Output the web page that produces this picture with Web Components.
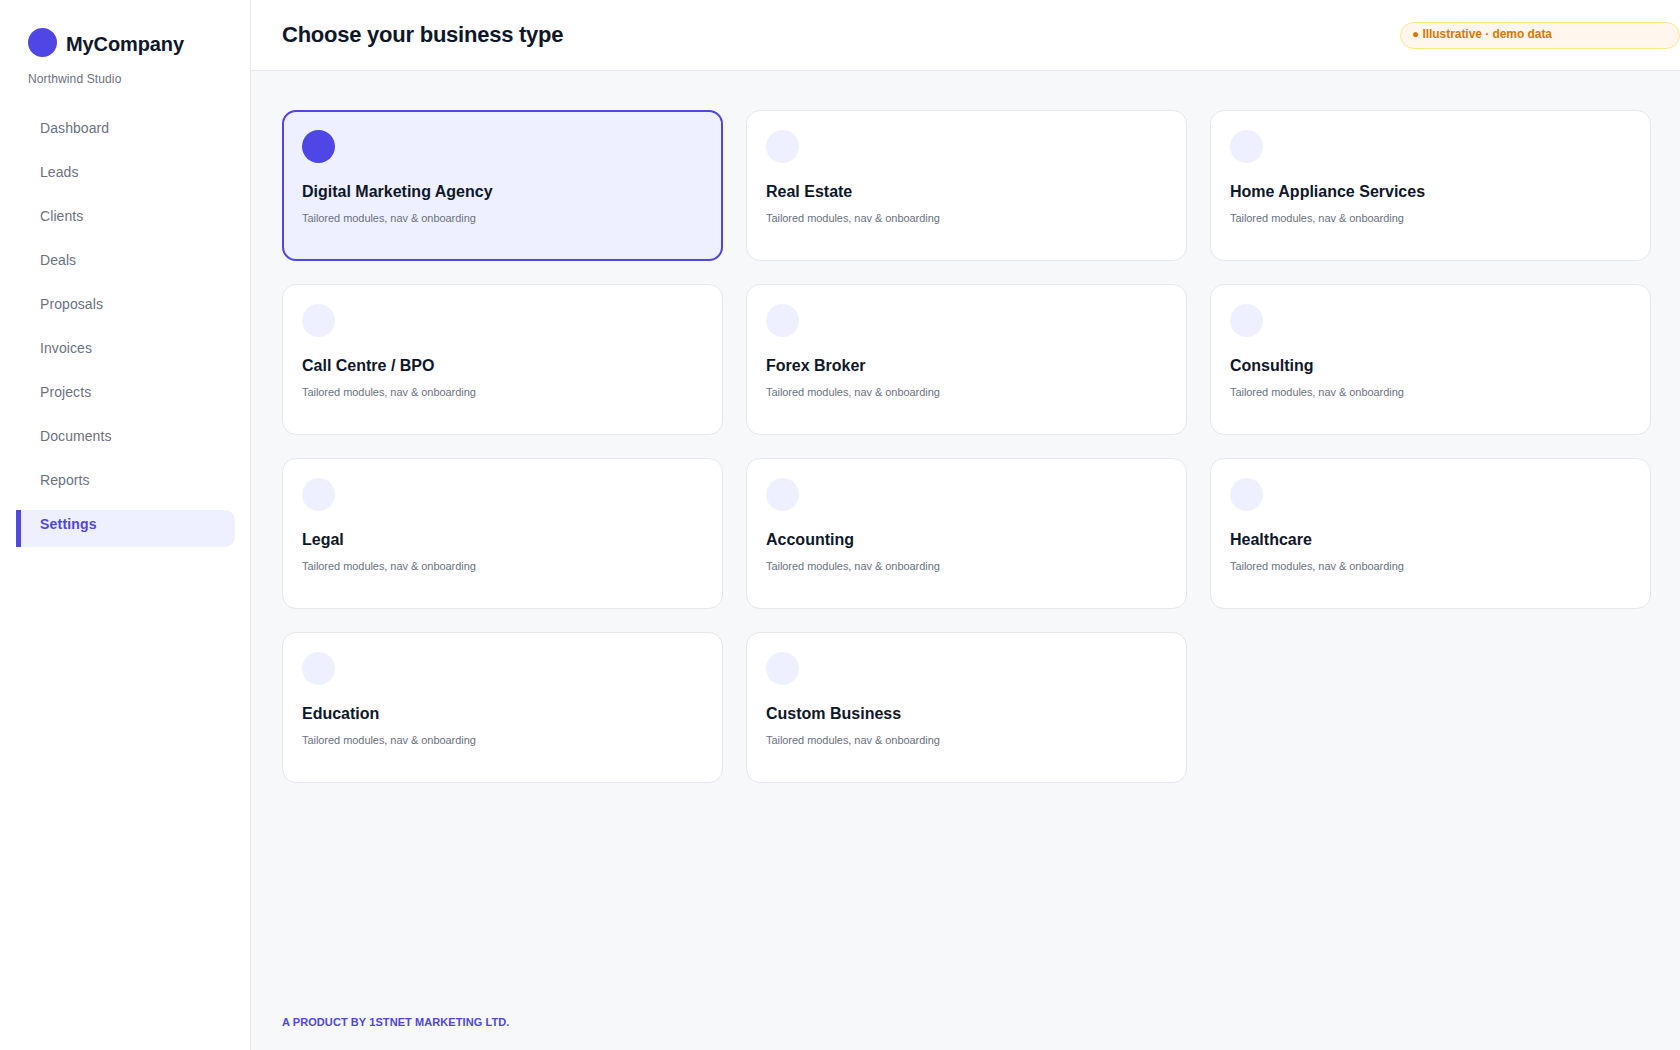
<!DOCTYPE html>
<html lang="en">
<head>
<meta charset="utf-8">
<title>Choose your business type</title>
<style>
	html, body { margin: 0; height: 100%; }
	body { font-family: "Liberation Sans", Arial, sans-serif; color: #0f172a; overflow: hidden; }
</style>
</head>
<body>
<app-shell>
	<side-bar slot="side" company="MyCompany" workspace="Northwind Studio">
		<nav-item>Dashboard</nav-item>
		<nav-item>Leads</nav-item>
		<nav-item>Clients</nav-item>
		<nav-item>Deals</nav-item>
		<nav-item>Proposals</nav-item>
		<nav-item>Invoices</nav-item>
		<nav-item>Projects</nav-item>
		<nav-item>Documents</nav-item>
		<nav-item>Reports</nav-item>
		<nav-item active>Settings</nav-item>
	</side-bar>
	<top-bar slot="top" heading="Choose your business type">● Illustrative · demo data</top-bar>
	<type-card selected>Digital Marketing Agency</type-card>
	<type-card>Real Estate</type-card>
	<type-card>Home Appliance Services</type-card>
	<type-card>Call Centre / BPO</type-card>
	<type-card>Forex Broker</type-card>
	<type-card>Consulting</type-card>
	<type-card>Legal</type-card>
	<type-card>Accounting</type-card>
	<type-card>Healthcare</type-card>
	<type-card>Education</type-card>
	<type-card>Custom Business</type-card>
	<span slot="foot">A PRODUCT BY 1STNET MARKETING LTD.</span>
</app-shell>

<script>
class AppShell extends HTMLElement {
	constructor() {
		super();
		this.attachShadow({ mode: 'open' });
		this.shadowRoot.innerHTML = `
			<style>
				:host { display: flex; height: 100vh; background: #f7f8fa; }
				main { flex: 1; min-width: 0; display: flex; flex-direction: column; }
				.grid {
					flex: 1;
					display: grid;
					grid-template-columns: repeat(3, 441px);
					grid-auto-rows: 151px;
					gap: 23px;
					padding: 39px 0 0 31px;
				}
				footer {
					padding: 0 0 21px 31px;
					font-size: 11px;
					line-height: 14px;
					font-weight: 700;
					letter-spacing: 0.08px;
					color: #4f46e5;
				}
			</style>
			<slot name="side"></slot>
			<main>
				<slot name="top"></slot>
				<div class="grid"><slot></slot></div>
				<footer><slot name="foot"></slot></footer>
			</main>
		`;
	}
}

class SideBar extends HTMLElement {
	constructor() {
		super();
		this.attachShadow({ mode: 'open' });
	}

	connectedCallback() {
		this.shadowRoot.innerHTML = `
			<style>
				:host {
					display: block;
					flex: none;
					width: 250px;
					background: #fff;
					border-right: 1px solid #e5e7eb;
				}
				.brand { display: flex; align-items: flex-start; gap: 9px; height: 29px; padding: 28px 0 0 28px; }
				.logo { width: 29px; height: 29px; border-radius: 50%; background: #4f46e5; }
				.name { padding-top: 1px; font-size: 20px; line-height: 30px; font-weight: 700; letter-spacing: -0.1px; color: #0f172a; }
				.org { padding: 14px 0 0 28px; font-size: 12px; line-height: 16px; letter-spacing: 0.13px; color: #6b7280; }
				nav { display: flex; flex-direction: column; gap: 7px; padding: 27px 15px 0 16px; }
			</style>
			<div class="brand"><div class="logo"></div><div class="name">${this.getAttribute('company')}</div></div>
			<div class="org">${this.getAttribute('workspace')}</div>
			<nav><slot></slot></nav>
		`;
	}
}

class NavItem extends HTMLElement {
	constructor() {
		super();
		this.attachShadow({ mode: 'open' });
		this.shadowRoot.innerHTML = `
			<style>
				:host {
					display: block;
					height: 37px;
					box-sizing: border-box;
					padding: 4px 0 0 24px;
					border-radius: 0 10px 10px 0;
					font-size: 14px;
					line-height: 20px;
					letter-spacing: 0.08px;
					color: #6b7280;
				}
				:host([active]) {
					padding-left: 19px;
					border-left: 5px solid #4f46e5;
					background: #eef0ff;
					color: #4f46e5;
					font-weight: 700;
					letter-spacing: 0.2px;
				}
			</style>
			<slot></slot>
		`;
	}
}

class TopBar extends HTMLElement {
	constructor() {
		super();
		this.attachShadow({ mode: 'open' });
	}

	connectedCallback() {
		this.shadowRoot.innerHTML = `
			<style>
				:host {
					display: flex;
					justify-content: space-between;
					align-items: center;
					height: 70px;
					padding-left: 31px;
					background: #fff;
					border-bottom: 1px solid #e5e7eb;
				}
				h1 { margin: 0 0 1px; font-size: 22px; line-height: 28px; font-weight: 700; letter-spacing: -0.24px; color: #0f172a; }
				.pill {
					box-sizing: border-box;
					width: 280px;
					height: 27px;
					margin-top: 1px;
					padding: 3px 0 0 11px;
					background: #fff7ed;
					border: 1px solid #fde68a;
					border-radius: 14px;
					font-size: 12px;
					line-height: 16px;
					font-weight: 700;
					letter-spacing: -0.05px;
					color: #d97706;
				}
			</style>
			<h1>${this.getAttribute('heading')}</h1>
			<div class="pill"><slot></slot></div>
		`;
	}
}

class TypeCard extends HTMLElement {
	constructor() {
		super();
		this.attachShadow({ mode: 'open' });
		this.shadowRoot.innerHTML = `
			<style>
				:host {
					display: block;
					box-sizing: border-box;
					padding: 19px;
					background: #fff;
					border: 1px solid #e5e7eb;
					border-radius: 14px;
				}
				:host([selected]) {
					padding: 18px;
					background: #eef0ff;
					border: 2px solid #4f46e5;
				}
				.icon { width: 33px; height: 33px; border-radius: 50%; background: #eef0ff; }
				:host([selected]) .icon { background: #4f46e5; }
				.title { margin-top: 18px; font-size: 16px; line-height: 22px; font-weight: 700; color: #0f172a; }
				.note { margin-top: 7px; font-size: 11px; line-height: 16px; letter-spacing: -0.05px; color: #6b7280; }
			</style>
			<div class="icon"></div>
			<div class="title"><slot></slot></div>
			<div class="note">Tailored modules, nav &amp; onboarding</div>
		`;
	}
}

customElements.define('app-shell', AppShell);
customElements.define('side-bar', SideBar);
customElements.define('nav-item', NavItem);
customElements.define('top-bar', TopBar);
customElements.define('type-card', TypeCard);
</script>
</body>
</html>
